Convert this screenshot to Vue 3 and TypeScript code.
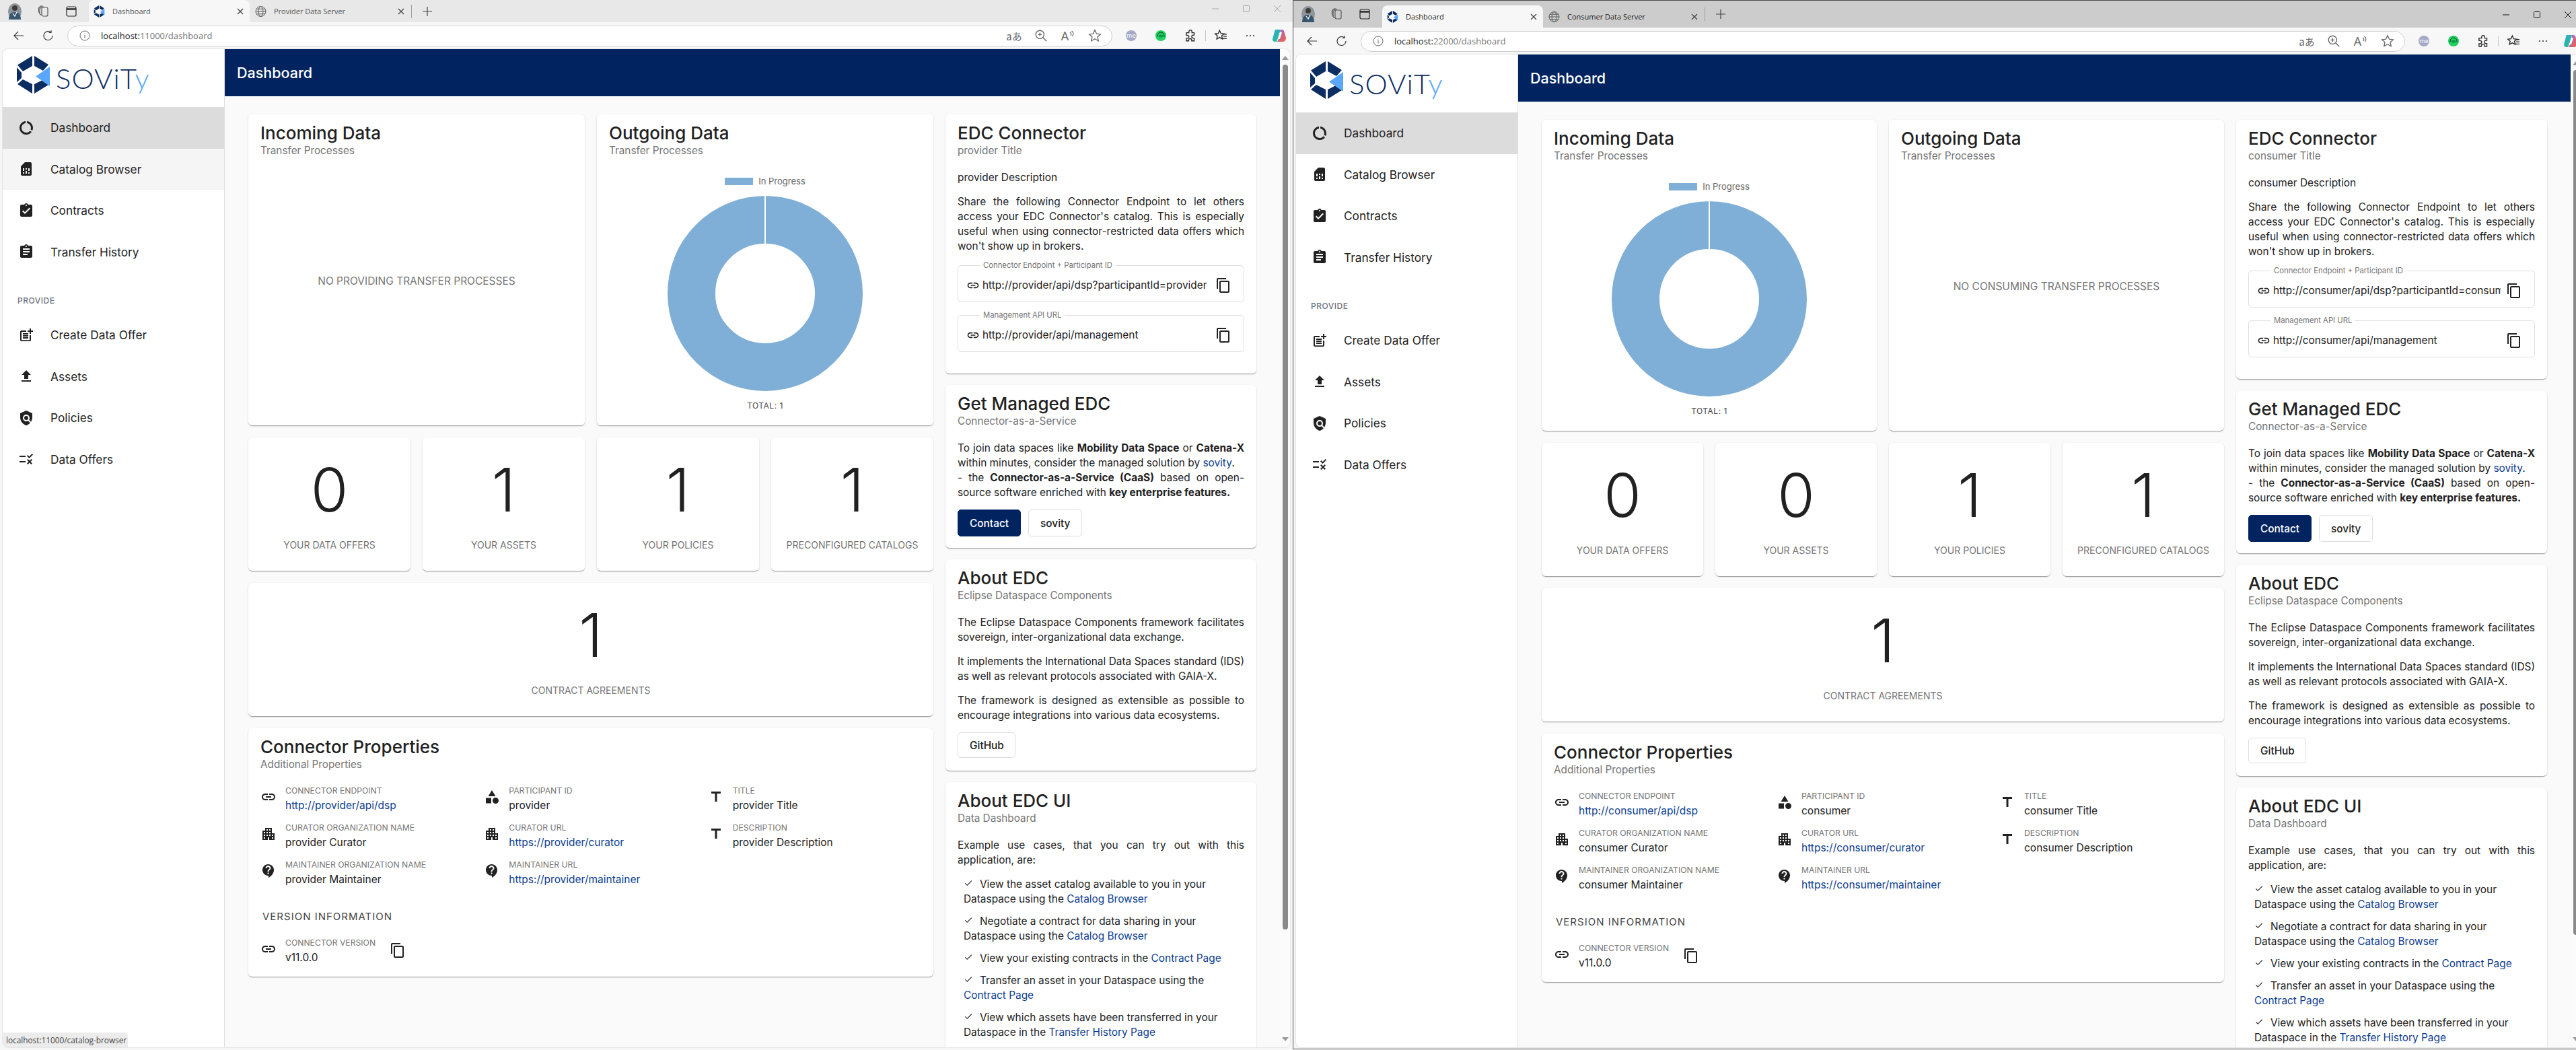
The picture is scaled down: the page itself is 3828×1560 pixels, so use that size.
<script setup lang="ts">
// Two browser windows side by side, same dashboard with different connector data
interface Win {
  key: string;
  focused: boolean;
  port: string;
  name: string;
  tab2: string;
  hoverNav: string;
  incoming: boolean;
  stats: { label: string; value: number }[];
  status: string;
}

const icons: Record<string, string> = {
  dashboard: 'M13 2.05v3.03c3.39.49 6 3.39 6 6.92 0 .9-.18 1.75-.48 2.54l2.6 1.53c.56-1.24.88-2.62.88-4.07 0-5.18-3.95-9.45-9-9.95zM12 19c-3.87 0-7-3.13-7-7 0-3.53 2.61-6.43 6-6.92V2.05c-5.06.5-9 4.76-9 9.95 0 5.52 4.47 10 9.99 10 3.31 0 6.24-1.61 8.06-4.09l-2.6-1.53C16.17 17.98 14.21 19 12 19z',
  catalog: 'M19.99 4c0-1.1-.89-2-1.99-2h-8L4 8v12c0 1.1.9 2 2 2h12c1.1 0 2-.9 2-2l-.01-16zM9 19H7v-2h2v2zm8 0h-2v-2h2v2zm-8-4H7v-4h2v4zm4 4h-2v-4h2v4zm0-6h-2v-2h2v2zm4 2h-2v-4h2v4z',
  contracts: 'M19 3h-4.18C14.4 1.84 13.3 1 12 1c-1.3 0-2.4.84-2.82 2H5c-1.1 0-2 .9-2 2v14c0 1.1.9 2 2 2h14c1.1 0 2-.9 2-2V5c0-1.1-.9-2-2-2zm-7 0c.55 0 1 .45 1 1s-.45 1-1 1-1-.45-1-1 .45-1 1-1zm-2 14l-4-4 1.41-1.41L10 14.17l6.59-6.59L18 9l-8 8z',
  history: 'M19 3h-4.18C14.4 1.84 13.3 1 12 1c-1.3 0-2.4.84-2.82 2H5c-1.1 0-2 .9-2 2v14c0 1.1.9 2 2 2h14c1.1 0 2-.9 2-2V5c0-1.1-.9-2-2-2zm-7 0c.55 0 1 .45 1 1s-.45 1-1 1-1-.45-1-1 .45-1 1-1zm2 14H7v-2h7v2zm3-4H7v-2h10v2zm0-4H7V7h10v2z',
  postAdd: 'M17 19.22H5V7h7V5H5c-1.1 0-2 .9-2 2v12c0 1.1.9 2 2 2h12c1.1 0 2-.9 2-2v-7h-2v7.22zM19 2h-2v3h-3c.01.01 0 2 0 2h3v2.99c.01.01 2 0 2 0V7h3V5h-3V2zM7 9h8v2H7zM7 12v2h8v-2zM7 15h8v2H7z',
  upload: 'M5 20h14v-2H5v2zm0-10h4v6h6v-6h4l-7-7-7 7z',
  policy: 'M12 1L3 5v6c0 5.55 3.84 10.74 9 12 2.3-.56 4.33-1.9 5.88-3.71l-3.12-3.12c-1.94 1.29-4.58 1.07-6.29-.64-1.95-1.95-1.95-5.12 0-7.07 1.95-1.95 5.12-1.95 7.07 0 1.71 1.71 1.92 4.35.64 6.29l2.9 2.9C20.29 15.69 21 13.38 21 11V5l-9-4zM12 15a3 3 0 1 0 0-6 3 3 0 0 0 0 6z',
  rule: 'M16.54 11L13 7.46l1.41-1.41 2.12 2.12 4.24-4.24 1.41 1.41L16.54 11zM11 7H2v2h9V7zm10 6.41L19.59 12 17 14.59 14.41 12 13 13.41 15.59 16 13 18.59 14.41 20 17 17.41 19.59 20 21 18.59 18.41 16 21 13.41zM11 15H2v2h9v-2z',
  link: 'M3.9 12c0-1.71 1.39-3.1 3.1-3.1h4V7H7c-2.76 0-5 2.24-5 5s2.24 5 5 5h4v-1.9H7c-1.71 0-3.1-1.39-3.1-3.1zM8 13h8v-2H8v2zm9-6h-4v1.9h4c1.71 0 3.1 1.39 3.1 3.1s-1.39 3.1-3.1 3.1h-4V17h4c2.76 0 5-2.24 5-5s-2.24-5-5-5z',
  copy: 'M16 1H4c-1.1 0-2 .9-2 2v14h2V3h12V1zm3 4H8c-1.1 0-2 .9-2 2v14c0 1.1.9 2 2 2h11c1.1 0 2-.9 2-2V7c0-1.1-.9-2-2-2zm0 16H8V7h11v14z',
  category: 'M12 2l-5.5 9h11zM17.5 22a4.5 4.5 0 1 0 0-9 4.5 4.5 0 0 0 0 9zM3 13.5h8v8H3z',
  apartment: 'M17 11V3H7v4H3v14h8v-4h2v4h8V11h-4zM7 19H5v-2h2v2zm0-4H5v-2h2v2zm0-4H5V9h2v2zm4 4H9v-2h2v2zm0-4H9V9h2v2zm0-4H9V5h2v2zm4 8h-2v-2h2v2zm0-4h-2V9h2v2zm0-4h-2V5h2v2zm4 12h-2v-2h2v2zm0-4h-2v-2h2v2z',
  support: 'M11.5 2C6.81 2 3 5.81 3 10.5S6.81 19 11.5 19h.5v3c4.86-2.34 8-7 8-11.5C20 5.81 16.19 2 11.5 2zm1 14.5h-2v-2h2v2zm0-3.5h-2c0-3.25 3-3 3-5 0-1.1-.9-2-2-2s-2 .9-2 2h-2c0-2.21 1.79-4 4-4s4 1.79 4 4c0 2.5-3 2.75-3 5z',
  title: 'M5 4v3h5.5v12h3V7H19V4z',
  check: 'M9 16.17L4.83 12l-1.42 1.41L9 19 21 7l-1.41-1.41z',
};

const windows: Win[] = [
  {
    key: 'provider',
    focused: false,
    port: '11000',
    name: 'Provider',
    tab2: 'Provider Data Server',
    hoverNav: 'Catalog Browser',
    incoming: false,
    stats: [
      { label: 'Your Data Offers', value: 0 },
      { label: 'Your Assets', value: 1 },
      { label: 'Your Policies', value: 1 },
      { label: 'Preconfigured Catalogs', value: 1 },
    ],
    status: 'localhost:11000/catalog-browser',
  },
  {
    key: 'consumer',
    focused: true,
    port: '22000',
    name: 'Consumer',
    tab2: 'Consumer Data Server',
    hoverNav: '',
    incoming: true,
    stats: [
      { label: 'Your Data Offers', value: 0 },
      { label: 'Your Assets', value: 0 },
      { label: 'Your Policies', value: 1 },
      { label: 'Preconfigured Catalogs', value: 1 },
    ],
    status: '',
  },
];

const navTop = [
  { label: 'Dashboard', icon: 'dashboard' },
  { label: 'Catalog Browser', icon: 'catalog' },
  { label: 'Contracts', icon: 'contracts' },
  { label: 'Transfer History', icon: 'history' },
];
const navProvide = [
  { label: 'Create Data Offer', icon: 'postAdd' },
  { label: 'Assets', icon: 'upload' },
  { label: 'Policies', icon: 'policy' },
  { label: 'Data Offers', icon: 'rule' },
];

const props = (k: string) => [
  { label: 'Connector Endpoint', icon: 'link', value: `http://${k}/api/dsp`, link: true },
  { label: 'Participant ID', icon: 'category', value: k, link: false },
  { label: 'Title', icon: 'title', value: `${k} Title`, link: false },
  { label: 'Curator Organization Name', icon: 'apartment', value: `${k} Curator`, link: false },
  { label: 'Curator URL', icon: 'apartment', value: `https://${k}/curator`, link: true },
  { label: 'Description', icon: 'title', value: `${k} Description`, link: false },
  { label: 'Maintainer Organization Name', icon: 'support', value: `${k} Maintainer`, link: false },
  { label: 'Maintainer URL', icon: 'support', value: `https://${k}/maintainer`, link: true },
];

const fields = (k: string) => [
  { label: 'Connector Endpoint + Participant ID', value: `http://${k}/api/dsp?participantId=${k}` },
  { label: 'Management API URL', value: `http://${k}/api/management` },
];
</script>

<template>
  <div class="desktop">
    <section v-for="w in windows" :key="w.key" class="win" :class="{ focused: w.focused }">
      <!-- tab strip -->
      <div class="strip">
        <div class="chrome-btn avatar-box">
          <svg class="avatar" viewBox="0 0 20 24">
            <ellipse cx="10" cy="12" rx="10" ry="12" fill="#8d949a" />
            <circle cx="10" cy="7" r="4" fill="#3f3a36" />
            <path d="M1 24c0-8 4-11 9-11s9 3 9 11z" fill="#39566f" />
            <path d="M7 15l3 4 3-6" fill="none" stroke="#fff" stroke-width="1.2" />
          </svg>
        </div>
        <div class="chrome-btn wk">
          <svg viewBox="0 0 20 20" class="ci">
            <rect x="7" y="4" width="9" height="13" rx="2" />
            <path d="M7 15H6a2 2 0 0 1-2-2V6l3-3h3" />
            <path d="M5 12H4.500a2 2 0 0 1-2-2V5l3-3h3" />
          </svg>
        </div>
        <div class="chrome-btn wk">
          <svg viewBox="0 0 20 20" class="ci dark">
            <rect x="3" y="3" width="14" height="14" rx="2" />
            <path d="M3 6.500h14" stroke-width="2.400" />
          </svg>
        </div>
        <div class="tab active-tab">
          <svg class="favicon" viewBox="0 0 49 56">
            <path d="M23 0v15L9 23 1 13.500zM26 0l21 13-8 9-13-7zM0 17l7 8v8l-7 6zM1 42l8-7 14 7v14zM26 42l12-6 9 7-21 13z" fill="#0c2d62" />
            <path d="M49 16v29L28 30.500z" fill="#5aa7f9" />
          </svg>
          <span class="tab-title">Dashboard</span>
          <svg class="tab-x" viewBox="0 0 12 12"><path d="M2 2l8 8M10 2l-8 8" /></svg>
        </div>
        <div class="tab">
          <svg class="favicon globe" viewBox="0 0 16 16">
            <circle cx="8" cy="8" r="7" />
            <ellipse cx="8" cy="8" rx="3.200" ry="7" />
            <path d="M1 8h14M2 4.500h12M2 11.500h12" />
          </svg>
          <span class="tab-title">{{ w.tab2 }}</span>
          <svg class="tab-x" viewBox="0 0 12 12"><path d="M2 2l8 8M10 2l-8 8" /></svg>
        </div>
        <span class="tab-sep"></span>
        <svg class="plus" viewBox="0 0 14 14"><path d="M7 0v14M0 7h14" /></svg>
        <div class="win-ctrl">
          <svg viewBox="0 0 12 12"><path d="M1 6h10" /></svg>
          <svg viewBox="0 0 12 12"><rect x="1.500" y="1.500" width="9" height="9" rx="1" /></svg>
          <svg viewBox="0 0 12 12"><path d="M1 1l10 10M11 1L1 11" /></svg>
        </div>
      </div>

      <!-- address bar -->
      <div class="toolbar">
        <svg class="nav-ic back" viewBox="0 0 18 18"><path d="M16 9H2M8 3L2 9l6 6" /></svg>
        <svg class="nav-ic reload" viewBox="0 0 18 18"><path d="M15 9a6.500 6.500 0 1 1-2.200-4.900M13 1v3.500H9.500" /></svg>
        <div class="address">
          <svg class="info" viewBox="0 0 16 16">
            <circle cx="8" cy="8" r="7" />
            <path d="M8 7v4.500M8 4.500v1" />
          </svg>
          <span class="url"><b>localhost:</b>{{ w.port }}/dashboard</span>
          <span class="addr-space"></span>
          <span class="addr-ic trans">aあ</span>
          <span class="addr-ic">
            <svg viewBox="0 0 18 18" class="ci gray"><circle cx="7.500" cy="7.500" r="5.500" /><path d="M11.500 11.500L16.500 16.500M7.500 5v5M5 7.500h5" /></svg>
          </span>
          <span class="addr-ic read">A<svg viewBox="0 0 8 12" class="ci gray waves"><path d="M1 4c2 1 2 3 1 5M3.500 2c3 2 3 5 1 8" /></svg></span>
          <span class="addr-ic last">
            <svg viewBox="0 0 18 18" class="ci gray"><path d="M9 1.500l2.300 5 5.200.600-3.900 3.500 1.100 5.400L9 13.300 4.300 16l1.100-5.400-3.900-3.500 5.200-.6z" /></svg>
          </span>
        </div>
        <div class="ext"><span class="ext-me">me</span></div>
        <div class="ext">
          <svg viewBox="0 0 16 16" class="ext-svg">
            <circle cx="8" cy="8" r="8" fill="#1fd15f" />
            <path d="M3 9.500V8a5 5 0 0 1 10 0v1.500" fill="none" stroke="#0b3b1e" stroke-width="1" />
            <ellipse cx="8" cy="8.500" rx="3.500" ry="2" fill="#12954a" />
          </svg>
        </div>
        <div class="ext">
          <svg viewBox="0 0 18 18" class="ci dark"><path d="M7 3.500a2 2 0 0 1 4 0V5h3v3.200h-1.300a2 2 0 0 0 0 4H14V16h-3.300v-1a2 2 0 0 0-4 0v1H3.500v-3.500H5a2 2 0 0 0 0-4H3.500V5H7z" /></svg>
        </div>
        <span class="bar-sep"></span>
        <div class="ext">
          <svg viewBox="0 0 18 18" class="ci dark"><path d="M7.500 2l1.800 4 4.200.5-3.100 2.800.9 4.200-3.800-2.200-3.800 2.200.9-4.200L1.500 6.500 5.700 6zM12 7h5M12.500 10h4.500M11.500 13h5.500" /></svg>
        </div>
        <div class="ext"><span class="dots"><i></i><i></i><i></i></span></div>
        <div class="copilot">
          <svg viewBox="0 0 22 22">
            <defs>
              <linearGradient :id="`cp1-${w.key}`" x1="0" y1="0" x2="1" y2="1">
                <stop offset="0" stop-color="#1ea8e8" />
                <stop offset="1" stop-color="#37c26f" />
              </linearGradient>
              <linearGradient :id="`cp2-${w.key}`" x1="0" y1="0" x2="1" y2="1">
                <stop offset="0" stop-color="#a05ce8" />
                <stop offset="1" stop-color="#f06a3a" />
              </linearGradient>
            </defs>
            <path d="M5 2h8l-3 10-3 8H5a4 4 0 0 1-4-4l3-11z" :fill="`url(#cp1-${w.key})`" />
            <path d="M13 2h2a4 4 0 0 1 3 2l3 10c0 4-2 6-5 6H8l3-6z" :fill="`url(#cp2-${w.key})`" />
            <path d="M12 6h3l-3 10H9z" fill="#fff" />
          </svg>
        </div>
      </div>

      <!-- page -->
      <div class="panel">
        <aside class="sidebar">
          <div class="logo">
            <svg class="logo-mark" viewBox="0 0 49 56">
              <path d="M23 0v15L9 23 1 13.500zM26 0l21 13-8 9-13-7zM0 17l7 8v8l-7 6zM1 42l8-7 14 7v14zM26 42l12-6 9 7-21 13z" fill="#0c2d62" />
              <path d="M49 16v29L28 30.500z" fill="#5aa7f9" />
            </svg>
            <span class="logo-text">SOViT<em>y</em></span>
          </div>
          <a
            v-for="n in navTop"
            :key="n.label"
            class="nav"
            :class="{ active: n.label === 'Dashboard', hover: n.label === w.hoverNav }"
          >
            <svg class="mi" viewBox="0 0 24 24"><path :d="icons[n.icon]" /></svg>
            <span>{{ n.label }}</span>
          </a>
          <div class="nav-head">PROVIDE</div>
          <a v-for="n in navProvide" :key="n.label" class="nav">
            <svg class="mi" viewBox="0 0 24 24"><path :d="icons[n.icon]" /></svg>
            <span>{{ n.label }}</span>
          </a>
          <div v-if="w.status" class="status">{{ w.status }}</div>
        </aside>

        <div class="main">
          <header class="topbar">Dashboard</header>
          <div class="content">
            <div class="col-left">
              <div class="row-2">
                <div class="card chart-card">
                  <h2>Incoming Data</h2>
                  <div class="sub">Transfer Processes</div>
                  <div v-if="w.incoming" class="chart">
                    <div class="legend"><i></i>In Progress</div>
                    <svg class="donut" viewBox="0 0 290 290">
                      <circle cx="145" cy="145" r="109.500" fill="none" stroke="#7fafd6" stroke-width="71" />
                      <rect x="144" y="0" width="2" height="72" fill="#fff" />
                    </svg>
                    <div class="total">TOTAL: 1</div>
                  </div>
                  <div v-else class="empty">No providing transfer processes</div>
                </div>
                <div class="card chart-card">
                  <h2>Outgoing Data</h2>
                  <div class="sub">Transfer Processes</div>
                  <div v-if="!w.incoming" class="chart">
                    <div class="legend"><i></i>In Progress</div>
                    <svg class="donut" viewBox="0 0 290 290">
                      <circle cx="145" cy="145" r="109.500" fill="none" stroke="#7fafd6" stroke-width="71" />
                      <rect x="144" y="0" width="2" height="72" fill="#fff" />
                    </svg>
                    <div class="total">TOTAL: 1</div>
                  </div>
                  <div v-else class="empty">No consuming transfer processes</div>
                </div>
              </div>
              <div class="row-4">
                <div v-for="s in w.stats" :key="s.label" class="card stat">
                  <div class="num">{{ s.value }}</div>
                  <div class="num-label">{{ s.label }}</div>
                </div>
              </div>
              <div class="card stat">
                <div class="num">1</div>
                <div class="num-label">Contract Agreements</div>
              </div>
              <div class="card props">
                <h2>Connector Properties</h2>
                <div class="sub">Additional Properties</div>
                <div class="prop-grid">
                  <div v-for="p in props(w.key)" :key="p.label" class="prop">
                    <svg class="mi" viewBox="0 0 24 24"><path :d="icons[p.icon]" /></svg>
                    <div>
                      <div class="prop-label">{{ p.label }}</div>
                      <div class="prop-value" :class="{ lnk: p.link }">{{ p.value }}</div>
                    </div>
                  </div>
                </div>
                <div class="ver-head">Version Information</div>
                <div class="prop ver">
                  <svg class="mi" viewBox="0 0 24 24"><path :d="icons.link" /></svg>
                  <div>
                    <div class="prop-label">Connector Version</div>
                    <div class="prop-value">v11.0.0</div>
                  </div>
                  <svg class="mi ver-copy" viewBox="0 0 24 24"><path :d="icons.copy" /></svg>
                </div>
              </div>
            </div>

            <div class="col-right">
              <div class="card side edc">
                <h2>EDC Connector</h2>
                <div class="sub">{{ w.key }} Title</div>
                <p class="first">{{ w.key }} Description</p>
                <p>
                  Share the following Connector Endpoint to let others access your EDC Connector's catalog. This is
                  especially useful when using connector-restricted data offers which won't show up in brokers.
                </p>
                <div v-for="f in fields(w.key)" :key="f.label" class="field">
                  <span class="field-label">{{ f.label }}</span>
                  <svg class="mi field-link" viewBox="0 0 24 24"><path :d="icons.link" /></svg>
                  <span class="field-value">{{ f.value }}</span>
                  <svg class="mi field-copy" viewBox="0 0 24 24"><path :d="icons.copy" /></svg>
                </div>
              </div>

              <div class="card side managed">
                <h2>Get Managed EDC</h2>
                <div class="sub">Connector-as-a-Service</div>
                <p class="first">
                  To join data spaces like <b>Mobility Data Space</b> or <b>Catena-X</b> within minutes, consider the
                  managed solution by <a class="lnk">sovity</a>.<br />
                  - the <b>Connector-as-a-Service (CaaS)</b> based on open-source software enriched with
                  <b>key enterprise features.</b>
                </p>
                <div class="btns">
                  <button class="btn primary">Contact</button>
                  <button class="btn">sovity</button>
                </div>
              </div>

              <div class="card side about">
                <h2>About EDC</h2>
                <div class="sub">Eclipse Dataspace Components</div>
                <p class="first">
                  The Eclipse Dataspace Components framework facilitates sovereign, inter-organizational data exchange.
                </p>
                <p>It implements the International Data Spaces standard (IDS) as well as relevant protocols associated with GAIA-X.</p>
                <p>The framework is designed as extensible as possible to encourage integrations into various data ecosystems.</p>
                <div class="btns">
                  <button class="btn github">GitHub</button>
                </div>
              </div>

              <div class="card side">
                <h2>About EDC UI</h2>
                <div class="sub">Data Dashboard</div>
                <p class="first">Example use cases, that you can try out with this application, are:</p>
                <ul class="uses">
                  <li><svg class="tick" viewBox="0 0 24 24"><path :d="icons.check" /></svg>View the asset catalog available to you in your Dataspace using the <a class="lnk">Catalog Browser</a></li>
                  <li><svg class="tick" viewBox="0 0 24 24"><path :d="icons.check" /></svg>Negotiate a contract for data sharing in your Dataspace using the <a class="lnk">Catalog Browser</a></li>
                  <li><svg class="tick" viewBox="0 0 24 24"><path :d="icons.check" /></svg>View your existing contracts in the <a class="lnk">Contract Page</a></li>
                  <li><svg class="tick" viewBox="0 0 24 24"><path :d="icons.check" /></svg>Transfer an asset in your Dataspace using the <a class="lnk">Contract Page</a></li>
                  <li><svg class="tick" viewBox="0 0 24 24"><path :d="icons.check" /></svg>View which assets have been transferred in your Dataspace in the <a class="lnk">Transfer History Page</a></li>
                </ul>
              </div>
            </div>
          </div>
        </div>

        <div class="scrollbar">
          <span class="arrow up"></span>
          <span class="thumb"></span>
          <span class="arrow down"></span>
        </div>
      </div>
    </section>
  </div>
</template>

<style>
html,
body {
  margin: 0;
  background: #f7f7f7;
}
</style>

<style scoped>
.desktop {
  width: 3828px;
  height: 1560px;
  display: flex;
  overflow: hidden;
  font-family: Inter, 'Noto Sans', sans-serif;
  color: #212121;
  background: #f7f7f7;
}

.win {
  flex: none;
  width: 1921px;
  height: 1560px;
  display: flex;
  flex-direction: column;
  box-sizing: border-box;
  background: #f7f7f7;
}

.win.focused {
  width: 1918px;
  border: 1px solid #4c4c4c;
  border-right: 0;
  height: 1559px;
}

/* tab strip */
.strip {
  flex: none;
  height: 33px;
  display: flex;
  align-items: center;
  background: #e8e8e8;
  font-family: 'Open Sans', sans-serif;
  font-size: 11px;
  color: #555;
}

.focused .strip {
  height: 40px;
  background: #cccccc;
  color: #222;
}

.chrome-btn {
  flex: none;
  display: flex;
  align-items: center;
  justify-content: center;
  height: 100%;
}

.avatar-box {
  width: 44px;
}

.avatar {
  width: 24px;
  height: 24px;
}

.wk {
  width: 41px;
}

.ci {
  width: 20px;
  height: 20px;
  fill: none;
  stroke: #555;
  stroke-width: 1.2;
}

.ci.dark {
  stroke: #222;
}

.ci.gray {
  stroke: #666;
}

.tab {
  flex: none;
  width: 238px;
  height: 100%;
  box-sizing: border-box;
  display: flex;
  align-items: center;
  padding: 0 8px 0 5px;
  margin-right: 1px;
}

.active-tab {
  margin-left: 6px;
  width: 239px;
  background: #f7f7f7;
  border-radius: 8px 8px 0 0;
}

.focused .tab {
  margin-top: 7px;
  height: calc(100% - 7px);
}

.favicon {
  flex: none;
  width: 17px;
  height: 18px;
  margin: 0 11px 0 2px;
}

.globe {
  fill: none;
  stroke: #555;
  stroke-width: 0.9;
}

.tab-title {
  flex: 1;
  white-space: nowrap;
}

.tab-x {
  flex: none;
  width: 12px;
  height: 12px;
  fill: none;
  stroke: #444;
  stroke-width: 1.300;
}

.tab-sep {
  flex: none;
  width: 1px;
  height: 20px;
  background: #a0a0a0;
}

.plus {
  flex: none;
  width: 14px;
  height: 14px;
  margin-left: 16px;
  fill: none;
  stroke: #444;
  stroke-width: 1.200;
}

.win-ctrl {
  margin-left: auto;
  display: flex;
  gap: 34px;
  padding-right: 17px;
  align-self: flex-start;
  padding-top: 7px;
}

.focused .win-ctrl {
  padding-top: 15px;
}

.win-ctrl svg {
  width: 12px;
  height: 12px;
  fill: none;
  stroke: #a8a8a8;
  stroke-width: 1;
}

.focused .win-ctrl svg {
  stroke: #111;
}

/* toolbar */
.toolbar {
  flex: none;
  height: 40px;
  display: flex;
  align-items: center;
  font-family: 'Open Sans', sans-serif;
}

.nav-ic {
  flex: none;
  width: 18px;
  height: 18px;
  fill: none;
  stroke: #333;
  stroke-width: 1.200;
}

.back {
  margin-left: 19px;
}

.reload {
  margin-left: 26px;
}

.address {
  flex: 1;
  height: 31px;
  margin: 0 6px 0 19px;
  box-sizing: border-box;
  border: 1px solid #cfcfcf;
  background: #fff;
  border-radius: 16px;
  display: flex;
  align-items: center;
  padding-left: 17px;
}

.info {
  flex: none;
  width: 16px;
  height: 16px;
  fill: none;
  stroke: #666;
  stroke-width: 1;
}

.url {
  margin-left: 16px;
  font-size: 13px;
  color: #777;
}

.url b {
  font-weight: 400;
  color: #222;
}

.addr-space {
  flex: 1;
}

.addr-ic {
  flex: none;
  width: 40px;
  display: flex;
  align-items: center;
  justify-content: center;
  color: #666;
}

.addr-ic.last {
  margin-right: 5px;
}

.trans {
  font-size: 15px;
  font-family: 'Noto Sans CJK JP', 'Open Sans', sans-serif;
}

.read {
  font-size: 18px;
}

.waves {
  width: 8px;
  height: 12px;
  margin: -6px 0 0 1px;
}

.ext {
  flex: none;
  width: 44px;
  display: flex;
  align-items: center;
  justify-content: center;
}

.ext-me {
  width: 16px;
  height: 16px;
  border-radius: 50%;
  background: #a3a9c6;
  color: #fff;
  font-size: 9px;
  line-height: 16px;
  text-align: center;
}

.ext-svg {
  width: 16px;
  height: 16px;
}

.bar-sep {
  flex: none;
  width: 1px;
  height: 16px;
  background: #c8c8c8;
}

.dots {
  display: flex;
  gap: 3px;
}

.dots i {
  width: 2px;
  height: 2px;
  background: #222;
  border-radius: 50%;
}

.copilot {
  flex: none;
  width: 41px;
  display: flex;
  justify-content: center;
}

.copilot svg {
  width: 22px;
  height: 22px;
}

.focused .copilot {
  width: 38px;
}

/* page panel */
.panel {
  flex: 1;
  min-height: 0;
  display: flex;
  margin: 0 4px 4px;
  background: #fafafa;
  border-radius: 8px;
  overflow: hidden;
  box-shadow: 0 0 2px rgba(0, 0, 0, 0.25);
  position: relative;
}

.focused .panel {
  margin-bottom: 2px;
}

.sidebar {
  flex: none;
  width: 329px;
  background: #fff;
  border-right: 1px solid #e0e0e0;
}

.logo {
  height: 86px;
  box-sizing: border-box;
  padding: 10px 0 0 21px;
  display: flex;
  align-items: flex-start;
  gap: 9px;
}

.logo-mark {
  width: 49px;
  height: 56px;
  flex: none;
}

.logo-text {
  margin-top: 8px;
  font-family: Lato, sans-serif;
  font-weight: 300;
  font-size: 42px;
  line-height: 50px;
  letter-spacing: 1px;
  color: #0c2d62;
}

.logo-text em {
  font-style: normal;
  color: #5aa7f9;
}

.nav {
  display: flex;
  align-items: center;
  height: 61.500px;
  padding-left: 23px;
  font-size: 17.300px;
  color: #212121;
}

.nav.active {
  background: #dcdcdc;
}

.nav.hover {
  background: #f5f5f5;
}

.mi {
  flex: none;
  width: 24px;
  height: 24px;
  fill: #212121;
}

.nav .mi {
  margin-right: 24px;
}

.nav-head {
  height: 62px;
  box-sizing: border-box;
  padding: 34px 0 0 22px;
  font-size: 12px;
  line-height: 16px;
  font-weight: 500;
  color: #6b7280;
  letter-spacing: 0.5px;
}

.status {
  position: absolute;
  left: 0;
  bottom: 0;
  height: 22px;
  width: 186px;
  box-sizing: border-box;
  padding: 0 0 0 5px;
  background: #ececec;
  border-radius: 0 5px 0 0;
  font-family: 'Open Sans', sans-serif;
  font-size: 11.800px;
  line-height: 22px;
  color: #444;
  white-space: nowrap;
}

.main {
  flex: 1;
  min-width: 0;
  overflow: hidden;
}

.topbar {
  height: 70px;
  box-sizing: border-box;
  padding-left: 18px;
  display: flex;
  align-items: center;
  background: #012460;
  color: #fff;
  font-size: 21.500px;
  font-weight: 500;
}

.content {
  display: grid;
  grid-template-columns: 1fr 462px;
  gap: 18px;
  padding: 27px 35px;
  align-items: start;
}

.col-left {
  display: flex;
  flex-direction: column;
  gap: 18px;
}

.col-right {
  display: flex;
  flex-direction: column;
  gap: 17px;
}

.row-2 {
  display: grid;
  grid-template-columns: 1fr 1fr;
  gap: 18px;
}

.row-4 {
  display: grid;
  grid-template-columns: repeat(4, 1fr);
  gap: 18px;
}

.card {
  background: #fff;
  border-radius: 6px;
  box-shadow: 0 2px 1px -1px rgba(0, 0, 0, 0.2), 0 1px 1px 0 rgba(0, 0, 0, 0.14), 0 1px 3px 0 rgba(0, 0, 0, 0.12);
  padding: 12px 18px;
  box-sizing: border-box;
}

h2 {
  margin: 0;
  font-size: 26px;
  line-height: 32px;
  font-weight: 500;
}

.sub {
  font-size: 15.300px;
  line-height: 20px;
  color: #757575;
}

.chart-card {
  height: 462px;
  display: flex;
  flex-direction: column;
  padding-bottom: 0;
}

.chart {
  display: flex;
  flex-direction: column;
  align-items: center;
}

.legend {
  margin-top: 27px;
  display: flex;
  align-items: center;
  font-size: 13px;
  line-height: 16px;
  color: #666;
}

.legend i {
  width: 42px;
  height: 11px;
  background: #7fafd6;
  margin-right: 8px;
}

.donut {
  width: 290px;
  height: 290px;
  margin-top: 14px;
}

.total {
  margin-top: 12px;
  font-size: 12px;
  line-height: 20px;
  letter-spacing: 0.5px;
  color: #444;
}

.empty {
  flex: 1;
  display: flex;
  align-items: center;
  justify-content: center;
  padding-bottom: 32px;
  font-size: 15.500px;
  text-transform: uppercase;
  color: #757575;
}

.stat {
  height: 198px;
  padding: 30px 8px 0;
  text-align: center;
}

.num {
  font-size: 90px;
  line-height: 96px;
  font-weight: 300;
}

.num-label {
  margin-top: 24px;
  font-size: 14px;
  line-height: 20px;
  text-transform: uppercase;
  color: #757575;
  white-space: nowrap;
}

.props {
  padding-bottom: 17px;
}

.prop-grid {
  margin-top: 21px;
  display: grid;
  grid-template-columns: repeat(3, 1fr);
  column-gap: 15px;
  row-gap: 14px;
}

.prop {
  display: flex;
  align-items: flex-start;
  gap: 13px;
}

.prop > .mi {
  margin-top: 5px;
}

.prop-label {
  font-size: 12.200px;
  line-height: 16px;
  margin-bottom: 3px;
  text-transform: uppercase;
  color: #757575;
}

.prop-value {
  font-size: 15.500px;
  line-height: 22px;
}

.lnk {
  color: #0b3d91;
}

.ver-head {
  margin: 34px 0 21px 3px;
  font-size: 15px;
  line-height: 20px;
  letter-spacing: 1px;
  text-transform: uppercase;
  color: #444;
}

.prop > .ver-copy {
  margin: 7px 0 0 8px;
}

.side p {
  margin: 14px 0 0;
  font-size: 15.400px;
  line-height: 22px;
  text-align: justify;
}

.side p.first {
  margin-top: 19px;
}

.edc {
  padding-bottom: 32px;
}

.field {
  position: relative;
  margin-top: 19px;
  height: 55px;
  box-sizing: border-box;
  border: 1px solid #dedede;
  border-radius: 5px;
  display: flex;
  align-items: center;
  padding: 4px 0 0 12px;
}

.side p + .field {
  margin-top: 17px;
}

.field-label {
  position: absolute;
  top: -8px;
  left: 32px;
  padding: 0 5px;
  background: #fff;
  font-size: 11.300px;
  line-height: 14px;
  color: #757575;
}

.field-link {
  width: 20px;
  height: 20px;
  margin-right: 4px;
}

.field-value {
  flex: 1;
  font-size: 15.400px;
  white-space: nowrap;
  overflow: hidden;
  color: #212121;
}

.field-copy {
  margin: 0 18px 0 8px;
}

.btns {
  margin-top: 14px;
  display: flex;
  gap: 11px;
}

.btn {
  height: 40px;
  padding: 0 17px;
  box-sizing: border-box;
  border: 1px solid #dedede;
  border-radius: 5px;
  background: #fff;
  font-family: inherit;
  font-size: 15.400px;
  font-weight: 500;
  color: #212121;
}

.btn.primary {
  width: 94px;
  background: #012460;
  border-color: #012460;
  color: #fff;
}

.btn.github {
  height: 38px;
  width: 86px;
}

.managed {
  padding-bottom: 17px;
}

.about {
  padding-bottom: 19px;
}

.uses {
  list-style: none;
  margin: 14px 0 0;
  padding: 0 10px 0 9px;
  font-size: 15.400px;
  line-height: 22px;
}

.uses li {
  margin-bottom: 11px;
}

.tick {
  width: 14px;
  height: 14px;
  margin-right: 10px;
  vertical-align: 0;
  fill: #212121;
}

.scrollbar {
  flex: none;
  width: 15px;
  background: #fbfbfb;
  display: flex;
  flex-direction: column;
  align-items: center;
  padding-top: 10px;
  box-sizing: border-box;
  position: relative;
}

.arrow {
  width: 0;
  height: 0;
  border-left: 5px solid transparent;
  border-right: 5px solid transparent;
}

.arrow.up {
  border-bottom: 6px solid #9a9a9a;
}

.arrow.down {
  border-top: 6px solid #9a9a9a;
  position: absolute;
  bottom: 9px;
}

.thumb {
  width: 8px;
  height: 1285px;
  margin-top: 7px;
  background: #8a8a8a;
  border-radius: 4px;
}
</style>
